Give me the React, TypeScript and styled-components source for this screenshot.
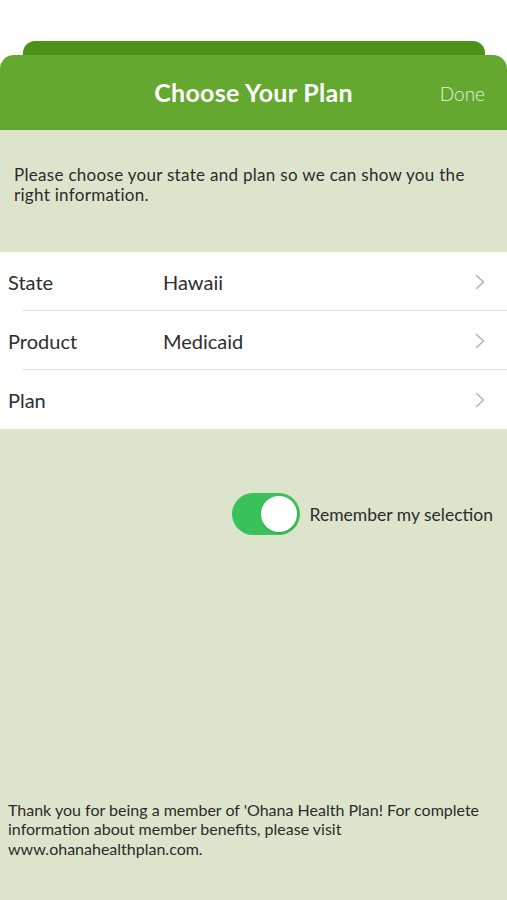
import React, { ReactElement, useState } from "react";
import styled, { createGlobalStyle } from "styled-components";

const GlobalStyle = createGlobalStyle`
  html, body {
    margin: 0;
    padding: 0;
    background: #ffffff;
  }
  body {
    font-family: Lato, "Open Sans", sans-serif;
  }
`;

const Screen = styled.div`
  width: 507px;
  height: 900px;
  display: flex;
  flex-direction: column;
  background: #ffffff;
  padding-top: 41px;
  box-sizing: border-box;
  overflow: hidden;
`;

const BackTab = styled.div`
  height: 14px;
  margin: 0 22px 0 23px;
  background: #4b9216;
  border-radius: 12px 12px 0 0;
`;

const Header = styled.header`
  height: 75px;
  background: #64a830;
  border-radius: 14px 14px 0 0;
  display: grid;
  grid-template-columns: 1fr auto 1fr;
  align-items: center;
`;

const Title = styled.h1`
  grid-column: 2;
  margin: 0 0 2px;
  font-size: 25px;
  font-weight: 700;
  color: #ffffff;
  letter-spacing: 0.3px;
`;

const DoneButton = styled.button`
  grid-column: 3;
  justify-self: end;
  border: none;
  background: transparent;
  padding: 0 22px 0 0;
  margin-top: 2px;
  font: inherit;
  font-size: 19px;
  font-weight: 300;
  color: #e8f3dd;
  cursor: pointer;
`;

const Body = styled.main`
  flex: 1;
  background: #dce5cb;
  display: flex;
  flex-direction: column;
`;

const Intro = styled.p`
  margin: 0;
  padding: 35px 14px 0;
  height: 122px;
  box-sizing: border-box;
  font-size: 17px;
  line-height: 20px;
  letter-spacing: 0.3px;
  color: #2b2b2b;
`;

const List = styled.ul`
  list-style: none;
  margin: 0;
  padding: 0;
  background: #ffffff;
  border-bottom: 1px solid #e2e2e2;
`;

const Row = styled.li<{ $divider: boolean }>`
  position: relative;
  height: 59px;
  display: grid;
  grid-template-columns: 155px 1fr auto;
  align-items: center;
  padding: 0 22px 0 8px;
  font-size: 20px;
  color: #2e2e2e;

  &::after {
    content: "";
    display: ${p => (p.$divider ? "block" : "none")};
    position: absolute;
    left: 22px;
    right: 0;
    bottom: 0;
    height: 1px;
    background: #e1e1e1;
  }
`;

const Label = styled.span``;
const Value = styled.span``;

const Chevron = styled.svg`
  width: 10px;
  height: 16px;
  margin-top: 1px;
`;

const ToggleRow = styled.div`
  display: flex;
  align-items: center;
  justify-content: flex-end;
  gap: 10px;
  padding: 63px 14px 0 0;
`;

const Switch = styled.button<{ $on: boolean }>`
  width: 68px;
  height: 42px;
  border-radius: 21px;
  border: none;
  padding: 0;
  background: ${p => (p.$on ? "#39c15a" : "#cfcfcf")};
  display: flex;
  align-items: center;
  justify-content: ${p => (p.$on ? "flex-end" : "flex-start")};
  cursor: pointer;
`;

const Thumb = styled.span`
  width: 36px;
  height: 36px;
  margin: 0 3px;
  border-radius: 50%;
  background: #ffffff;
  box-shadow: 0 1px 2px rgba(0, 0, 0, 0.15);
`;

const ToggleLabel = styled.span`
  font-size: 17.5px;
  color: #2b2b2b;
`;

const Footer = styled.p`
  margin: auto 0 0;
  padding: 0 8px 42px;
  font-size: 16px;
  line-height: 19.5px;
  color: #2b2b2b;
`;

function ChevronIcon(): ReactElement {
  return (
    <Chevron viewBox="0 0 10 16" fill="none">
      <path d="M1.5 1.5 L8.5 8 L1.5 14.5" stroke="#b4b4b4" strokeWidth="1.6" strokeLinecap="round" strokeLinejoin="round" />
    </Chevron>
  );
}

const rows = [
  { label: "State", value: "Hawaii" },
  { label: "Product", value: "Medicaid" },
  { label: "Plan", value: "" },
];

export default function App(): ReactElement {
  const [remember, setRemember] = useState(true);

  return (
    <Screen>
      <GlobalStyle />
      <BackTab />
      <Header>
        <Title>Choose Your Plan</Title>
        <DoneButton>Done</DoneButton>
      </Header>
      <Body>
        <Intro>
          Please choose your state and plan so we can show you the right information.
        </Intro>
        <List>
          {rows.map((r, i) => (
            <Row key={r.label} $divider={i < rows.length - 1}>
              <Label>{r.label}</Label>
              <Value>{r.value}</Value>
              <ChevronIcon />
            </Row>
          ))}
        </List>
        <ToggleRow>
          <Switch $on={remember} onClick={() => setRemember(!remember)}>
            <Thumb />
          </Switch>
          <ToggleLabel>Remember my selection</ToggleLabel>
        </ToggleRow>
        <Footer>
          Thank you for being a member of 'Ohana Health Plan! For complete information about member benefits, please visit www.ohanahealthplan.com.
        </Footer>
      </Body>
    </Screen>
  );
}
